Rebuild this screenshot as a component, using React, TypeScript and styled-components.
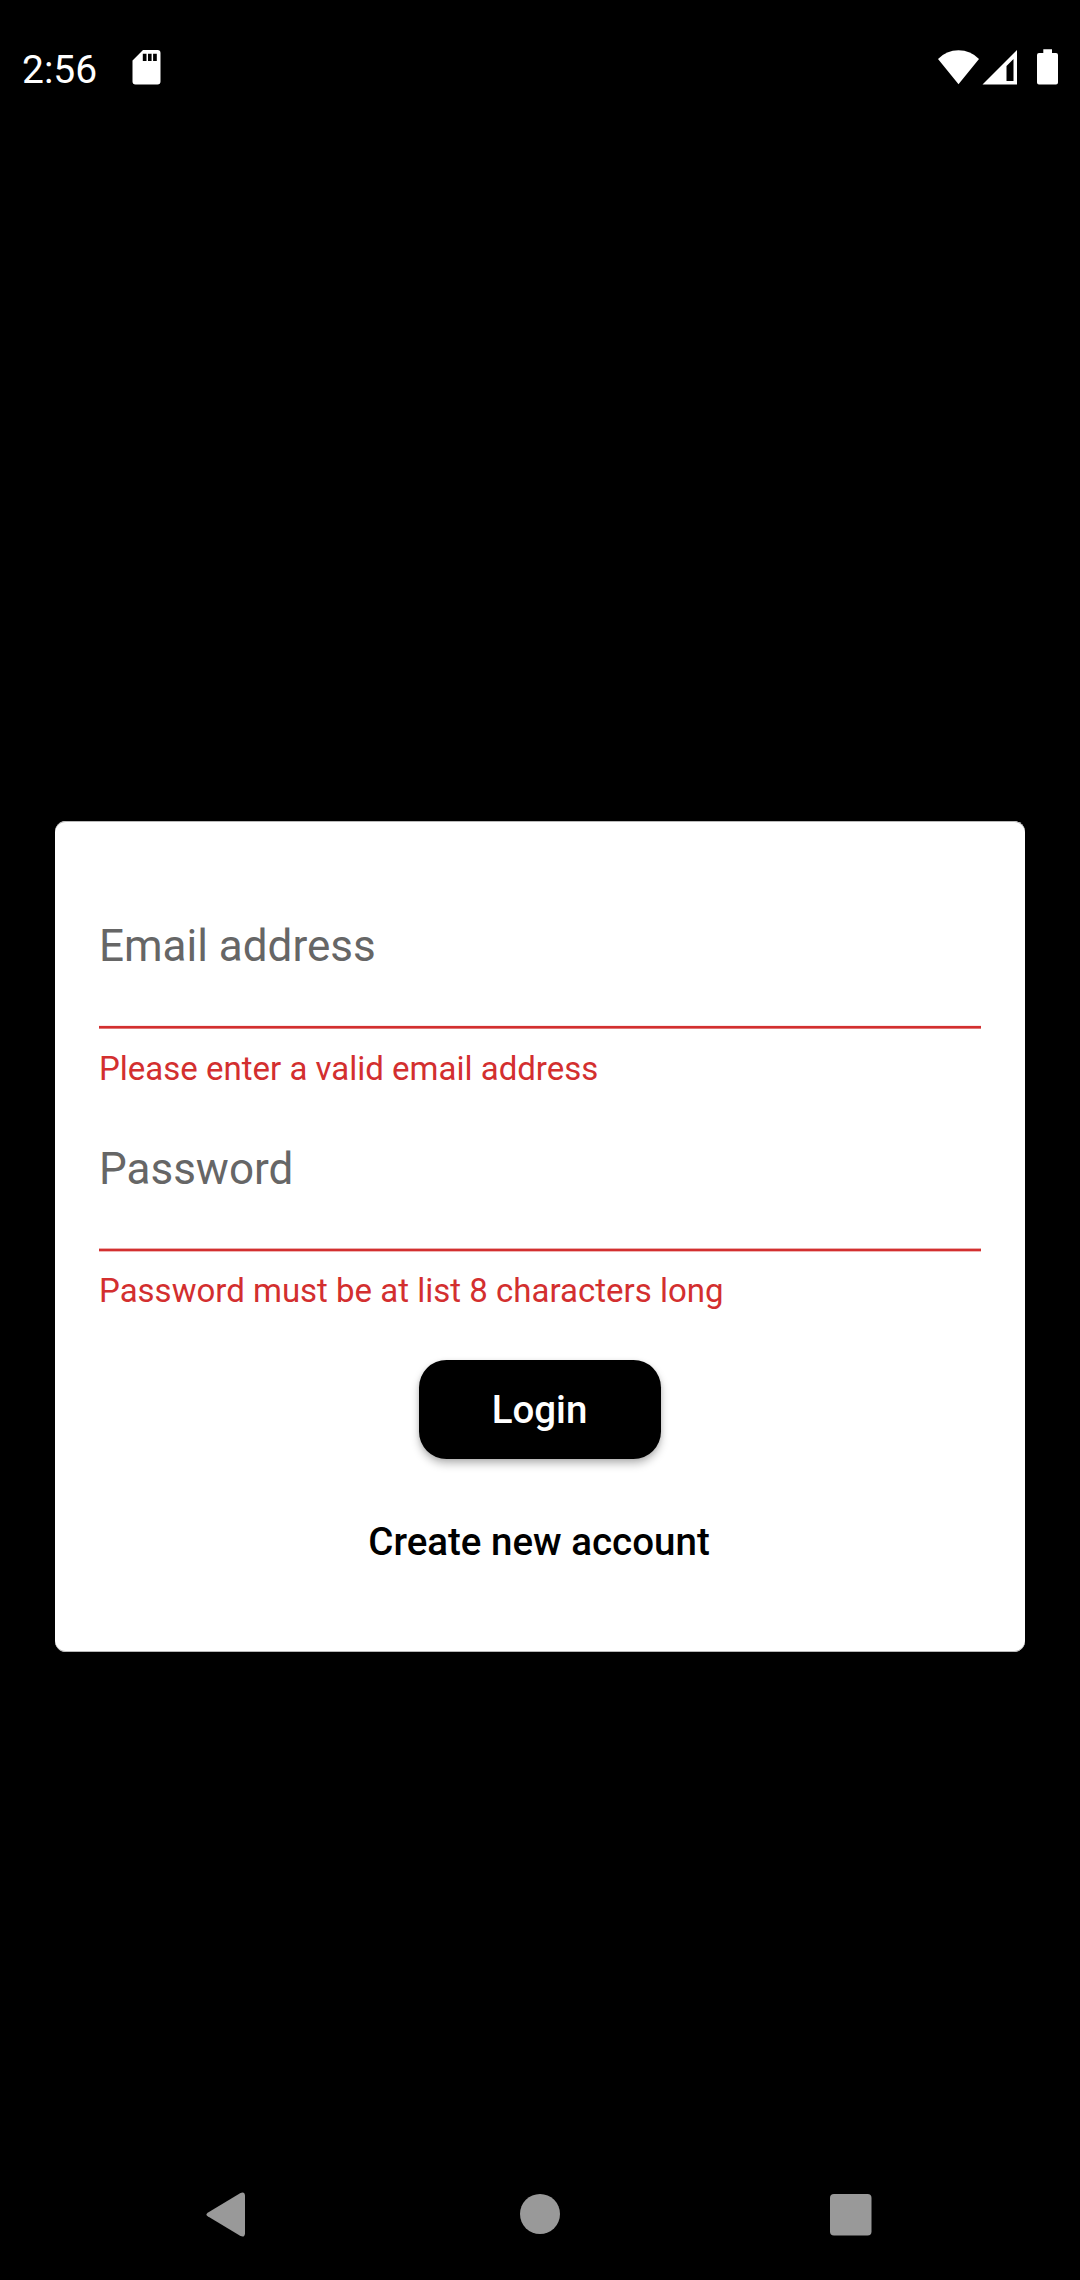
import React from "react";
import styled, { createGlobalStyle } from "styled-components";

const GlobalStyle = createGlobalStyle`
  * { box-sizing: border-box; }
  html, body { margin: 0; padding: 0; background: #000; }
  body { font-family: Roboto, "Noto Sans", sans-serif; }
`;

const Screen = styled.div`
  display: flex;
  flex-direction: column;
  width: 1080px;
  height: 2280px;
  background: #000;
  overflow: hidden;
`;

const StatusBar = styled.header`
  display: flex;
  justify-content: space-between;
  height: 136px;
  padding: 47px 22px 0;
  color: #fff;
`;

const StatusGroup = styled.div`
  display: flex;
  align-items: flex-start;
`;

const Clock = styled.span`
  width: 110px;
  font-size: 39px;
  line-height: 46px;
`;

const StatusIcon = styled.svg<{ $gap?: number }>`
  display: block;
  flex: none;
  margin-left: ${(p) => p.$gap ?? 0}px;
  fill: #fff;
`;

const Main = styled.main`
  flex: 1;
  padding: 685px 55px 0;
`;

const Card = styled.form`
  display: flex;
  flex-direction: column;
  height: 831px;
  padding: 99px 44px 0;
  border-radius: 11px;
  background: #fff;
  box-shadow: inset 0 1px #b8b8b8, inset 0 -1px #b8b8b8;
`;

const Field = styled.div`
  display: flex;
  flex-direction: column;
  height: 223px;
`;

const Label = styled.label`
  height: 105px;
  font-size: 44px;
  line-height: 52px;
  color: #666;
`;

const Underline = styled.svg`
  display: block;
  flex: none;
  width: 100%;
  height: 4px;
  fill: #d32f2f;
`;

const ErrorText = styled.span<{ $gap: number }>`
  margin-top: ${(p) => p.$gap}px;
  font-size: 33px;
  line-height: 40px;
  color: #d32f2f;
`;

const Actions = styled.div`
  display: flex;
  flex-direction: column;
  align-items: center;
`;

const LoginButton = styled.button`
  width: 242px;
  height: 99px;
  margin-top: -6px;
  padding: 0 1px 0 0;
  border: 0;
  border-radius: 27.5px;
  background: #000;
  color: #fff;
  font: 500 38.5px/46px Roboto, sans-serif;
  box-shadow: 0 5px 8px rgba(0, 0, 0, 0.26), 0 1px 4px rgba(0, 0, 0, 0.1);
`;

const CreateButton = styled.button`
  margin-top: 60px;
  padding: 0 2px 0 0;
  border: 0;
  background: none;
  color: #000;
  font: 500 38.5px/46px Roboto, sans-serif;
`;

const NavBar = styled.nav`
  display: flex;
  justify-content: space-between;
  height: 132px;
  padding: 44px 207px 0 206px;
`;

const NavIcon = styled.svg`
  display: block;
  width: 44px;
  height: 48px;
  fill: #999;
`;

interface LoginFieldProps {
  label: string;
  error: string;
  lineOffset: number;
  errorGap: number;
}

function LoginField({ label, error, lineOffset, errorGap }: LoginFieldProps) {
  return (
    <Field>
      <Label>{label}</Label>
      <Underline viewBox="0 0 882 4" preserveAspectRatio="none">
        <rect y={lineOffset} width="882" height="2.75" />
      </Underline>
      <ErrorText $gap={errorGap}>{error}</ErrorText>
    </Field>
  );
}

export default function App() {
  return (
    <Screen>
      <GlobalStyle />
      <StatusBar>
        <StatusGroup>
          <Clock>2:56</Clock>
          <StatusIcon width="29" height="38" viewBox="0 0 29 38">
            <path
              fillRule="evenodd"
              d="M11 3h14.500q3 0 3 3v28.500q0 3-3 3h-22q-3 0-3-3V13.500zM10.800 6.700v7.300h3.700V6.700zM16 6.700v7.300h3.600V6.700zM21.100 6.700v7.300h3.700V6.700z"
            />
          </StatusIcon>
        </StatusGroup>
        <StatusGroup>
          <StatusIcon width="42" height="38" viewBox="0 0 42 38">
            <path d="M0 12Q8.500 3.300 20.500 3.300T41 12L20.500 37.300z" />
          </StatusIcon>
          <StatusIcon $gap={2} width="36" height="38" viewBox="0 0 36 38">
            <path fillRule="evenodd" d="M35 3v34.500H.5zM31.500 12L24.500 19v15h7z" />
          </StatusIcon>
          <StatusIcon $gap={19} width="21" height="38" viewBox="0 0 21 38">
            <path d="M6.300 2.300h8.700V6h4q2 0 2 2v27.500q0 2-2 2H2q-2 0-2-2V8q0-2 2-2h4.300z" />
          </StatusIcon>
        </StatusGroup>
      </StatusBar>
      <Main>
        <Card>
          <LoginField
            label="Email address"
            error="Please enter a valid email address"
            lineOffset={0.9}
            errorGap={20}
          />
          <LoginField
            label="Password"
            error="Password must be at list 8 characters long"
            lineOffset={0.6}
            errorGap={19}
          />
          <Actions>
            <LoginButton type="button">Login</LoginButton>
            <CreateButton type="button">Create new account</CreateButton>
          </Actions>
        </Card>
      </Main>
      <NavBar>
        <NavIcon viewBox="0 0 44 48">
          <path d="M1.700 20.700L34.500.9Q38.700-.8 39 3.500v38q-.3 4.300-4.500 2.600L1.700 24.300Q-.8 22.500 1.700 20.700z" />
        </NavIcon>
        <NavIcon viewBox="0 0 44 48">
          <circle cx="22" cy="22" r="20" />
        </NavIcon>
        <NavIcon viewBox="0 0 44 48">
          <rect x="1" y="2" width="41.500" height="41.500" rx="4" />
        </NavIcon>
      </NavBar>
    </Screen>
  );
}
